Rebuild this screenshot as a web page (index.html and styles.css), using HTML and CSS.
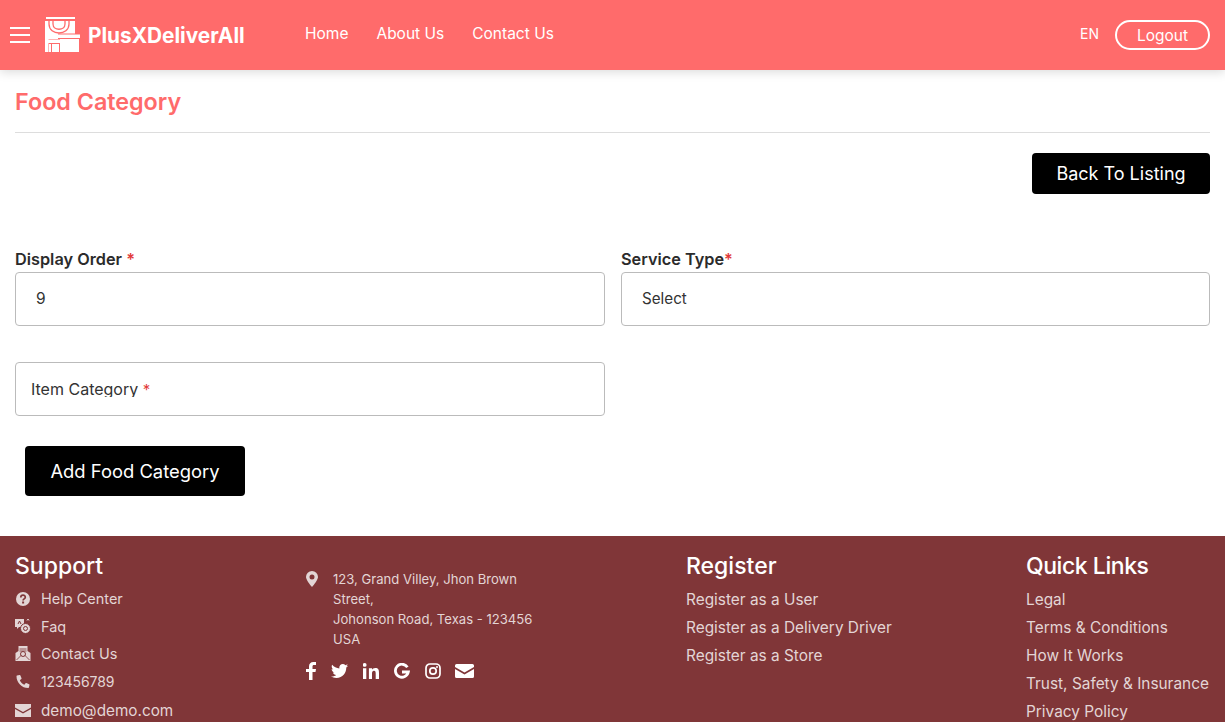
FILE: index.html
```html
<!DOCTYPE html>
<html lang="en">
<head>
	<meta charset="UTF-8">
	<title>Food Category</title>
	<link rel="stylesheet" href="styles.css">
</head>
<body>
<header class="top">
	<div class="burger"><span></span><span></span><span></span></div>
	<svg class="logo" width="36" height="36" viewBox="0 0 36 36">
		<path fill="#fff" d="M1 0h29v2H1zM0 4h30v12.500H13v5.500H3.500v13H0z"/>
		<path fill="none" stroke="#ff6b6b" stroke-width="1.300" d="M4 4v3c0 12 20 12 20 0V4M8 4v3c0 7 12 7 12 0V4"/>
		<path fill="#fff" d="M13 17.500h22v3.500H13zM15 22h19v13H15zM3 22.500h12v3.500H3zM4 27h10v8H4z"/>
		<path stroke="#ff6b6b" d="M6.500 27v8"/>
	</svg>
	<a class="brand">PlusXDeliverAll</a>
	<nav class="menu">
		<a>Home</a>
		<a>About Us</a>
		<a>Contact Us</a>
	</nav>
	<span class="lang">EN</span>
	<a class="logout">Logout</a>
</header>

<main class="content">
	<h1 class="title">Food Category</h1>
	<div class="actions"><a class="btn btn_back">Back To Listing</a></div>
	<form class="form">
		<div class="field">
			<label class="lbl">Display Order <i>*</i></label>
			<div class="box box_val box_num">9</div>
		</div>
		<div class="field">
			<label class="lbl">Service Type<i>*</i></label>
			<div class="box box_val">Select</div>
		</div>
		<div class="field">
			<div class="box box_ph"><span class="ph">Item Category <i>*</i></span></div>
		</div>
	</form>
	<a class="btn btn_add">Add Food Category</a>
</main>

<footer class="foot">
	<div class="col col_support">
		<h3>Support</h3>
		<ul class="sup">
			<li><svg width="14" height="14" viewBox="0 0 14 14"><circle cx="7" cy="7" r="7" fill="#e3d5d5"/><path d="M4.800 5.400c0-3 4.500-3 4.500-.2 0 1.700-2.200 1.600-2.200 3.200" fill="none" stroke="#803638" stroke-width="1.700"/><rect x="6.100" y="9.500" width="2" height="2" fill="#803638"/></svg>Help Center</li>
			<li><svg width="16" height="16" viewBox="0 0 16 16"><path fill="#e3d5d5" d="M0 1h9v8H4l-2 2V9H0z"/><circle cx="10.500" cy="10.500" r="5" fill="#e3d5d5" stroke="#803638"/><circle cx="10.500" cy="10.500" r="2" fill="none" stroke="#803638"/><path stroke="#803638" fill="none" d="M3 6l1.500-3L6 6"/><path stroke="#e3d5d5" fill="none" d="M12 2.500l1-1.500 1 1.500"/></svg>Faq</li>
			<li><svg width="15" height="15" viewBox="0 0 15 15"><path fill="#e3d5d5" d="M3 0h9v5l3 2v8H0V7l3-2z"/><path fill="none" stroke="#803638" stroke-width=".8" d="M4 3h7M4 5h7M1 14l5-5M14 14L9 9"/><circle cx="7.500" cy="8" r="2.500" fill="none" stroke="#803638"/></svg>Contact Us</li>
			<li class="sup_tel"><svg width="13" height="13" viewBox="0 0 512 512"><path fill="#e3d5d5" d="M493 24L389 0c-11-3-23 3-27 14l-48 112c-4 10-1 21 7 28l60 50c-36 77-99 140-177 177l-50-60c-7-8-18-11-28-7L14 362c-11 5-17 16-14 27l24 104c2 11 12 19 23 19 256 0 465-207 465-465 0-11-8-21-19-23z" transform="matrix(-1 0 0 1 512 0)"/></svg>123456789</li>
			<li class="sup_mail"><svg width="16" height="13" viewBox="0 0 16 13"><path fill="#e3d5d5" d="M0 0h16v3.500L8 8 0 3.500zM0 5l8 4.500L16 5v8H0z"/></svg>demo@demo.com</li>
		</ul>
	</div>
	<div class="col col_addr">
		<div class="addr">
			<svg width="12" height="16" viewBox="0 0 12 16"><path fill="#e3d5d5" fill-rule="evenodd" d="M6 0a6 6 0 0 1 6 6c0 2.500-4 8-6 10C4 14 0 8.500 0 6a6 6 0 0 1 6-6zm0 3.500a2.500 2.500 0 1 0 0 5 2.500 2.500 0 0 0 0-5z"/></svg>
			<p>123, Grand Villey, Jhon Brown Street,<br>Johonson Road, Texas - 123456<br>USA</p>
		</div>
		<div class="social">
			<svg width="10" height="18" viewBox="0 0 10 18"><path fill="#fff" d="M3 18V10H0V7h3V4.500C3 1.500 4.800 0 7.300 0H10v3H8C6.800 3 6.500 3.600 6.500 4.600V7H10l-.5 3h-3v8z"/></svg>
			<svg width="17" height="14" viewBox="0 0 512 416"><path fill="#fff" d="M459 104c.3 4.500.3 9 .3 13.600C459.300 256 354 416 161 416 102 416 46 399 0 369c8 1 16 1 25 1 49 0 94-17 130-45-46-1-85-31-98-73 6 1 13 2 20 2 9 0 19-1 27-4C56 240 20 198 20 147v-1c14 8 31 13 48 14C40 141 21 109 21 73c0-20 5-38 14-54C87 83 165 125 253 130c-2-8-3-16-3-24 0-58 47-106 106-106 30 0 58 13 77 33 24-5 47-14 67-26-8 25-25 46-47 59 21-2 42-8 61-16-14 21-32 39-53 54z"/></svg>
			<svg width="16" height="16" viewBox="0 0 16 16"><path fill="#fff" d="M0 5.300h3.300V16H0zM1.700 0a1.900 1.900 0 1 1 0 3.800 1.900 1.900 0 0 1 0-3.800zM5.900 5.300H9v1.500c.5-.9 1.600-1.700 3.300-1.700 3.100 0 3.700 2 3.700 4.800V16h-3.300v-5.300c0-1.300 0-2.900-1.700-2.900s-2 1.400-2 2.800V16H5.900z"/></svg>
			<svg width="16" height="16" viewBox="0 0 16 16"><path fill="none" stroke="#fff" stroke-width="2.800" d="M13.400 4.200A6.500 6.500 0 1 0 14.300 9H8"/></svg>
			<svg width="16" height="16" viewBox="0 0 16 16"><rect x="1" y="1" width="14" height="14" rx="4" fill="none" stroke="#fff" stroke-width="1.700"/><circle cx="8" cy="8" r="3.200" fill="none" stroke="#fff" stroke-width="1.700"/><circle cx="12" cy="4" r="1" fill="#fff"/></svg>
			<svg class="social_mail" width="19" height="14" viewBox="0 0 18 14" preserveAspectRatio="none"><path fill="#fff" d="M1.500 0h15A1.500 1.500 0 0 1 18 1.500V3L9 8.500 0 3V1.500A1.500 1.500 0 0 1 1.500 0zM0 5l9 5.500L18 5v7.500a1.500 1.500 0 0 1-1.500 1.500h-15A1.500 1.500 0 0 1 0 12.500z"/></svg>
		</div>
	</div>
	<div class="col col_reg">
		<h3>Register</h3>
		<ul class="links">
			<li>Register as a User</li>
			<li>Register as a Delivery Driver</li>
			<li>Register as a Store</li>
		</ul>
	</div>
	<div class="col col_quick">
		<h3>Quick Links</h3>
		<ul class="links">
			<li>Legal</li>
			<li>Terms &amp; Conditions</li>
			<li>How It Works</li>
			<li>Trust, Safety &amp; Insurance</li>
			<li>Privacy Policy</li>
		</ul>
	</div>
</footer>
</body>
</html>
```

FILE: styles.css
```css
* { box-sizing: border-box; }
html, body { height: 100%; }
body { margin: 0; overflow: hidden; background: #fff; color: #333; font: 15px Inter, "Open Sans", sans-serif; }
ul { margin: 0; padding: 0; list-style: none; }
h1, h3, p { margin: 0; }
i { font-style: normal; color: #e23b3b; }

.top { height: 70px; display: flex; align-items: center; padding: 0 15px 0 10px; background: #ff6b6b; box-shadow: 0 2px 10px rgba(0,0,0,.15); color: #fff; position: relative; }
.burger { width: 20px; display: flex; flex-direction: column; gap: 5px; margin-right: 15px; }
.burger span { height: 2px; background: #fff; }
.logo { margin-right: 7px; }
.brand { font-size: 20.800px; font-weight: 700; width: 217px; }
.menu { display: flex; gap: 28px; flex: 1; padding-bottom: 3px; }
.menu a { font-size: 15.500px; }
.lang { font-size: 14px; margin: 0 16px 3px 0; }
.logout { width: 95px; height: 30px; border: 2px solid #fff; border-radius: 15px; display: flex; align-items: center; justify-content: center; font-size: 15.500px; }

.content { padding: 0 15px; height: 466px; }
.title { height: 63px; padding-top: 17px; border-bottom: 1px solid #ddd; color: #ff6b6b; font-size: 23.300px; font-weight: 600; }
.actions { display: flex; justify-content: flex-end; padding-top: 20px; height: 116px; }
.btn { display: flex; align-items: center; justify-content: center; background: #000; color: #fff; border-radius: 4px; font-size: 18px; }
.btn_back { width: 178px; height: 41px; }
.form { display: grid; grid-template-columns: 590px 589px; column-gap: 16px; row-gap: 36px; }
.lbl { display: block; height: 23px; font-size: 16.300px; font-weight: 600; color: #2b2b2b; line-height: 20px; }
.box { height: 54px; border: 1px solid #bbb; border-radius: 4px; display: flex; align-items: center; font-size: 15.200px; color: #333; }
.box_val { padding: 0 0 2px 20px; }
.box_num { font-size: 15.500px; }
.box_ph { padding-left: 15px; }
.ph { height: 16px; overflow: hidden; line-height: 17px; font-size: 16px; }
.ph i { font-size: 15px; }
.btn_add { width: 220px; height: 50px; margin: 30px 0 0 10px; font-size: 18.400px; }

.foot { height: 186px; overflow: hidden; padding: 16px 15px 0; display: flex; background: #803638; color: #e3d5d5; font-size: 14.500px; }
.col h3 { color: #fff; font-size: 23px; font-weight: 500; line-height: 28px; }
.col_support { width: 291px; }
.col_addr { width: 380px; padding-top: 17px; }
.col_reg { width: 340px; }
.col_quick h3 { letter-spacing: -.45px; }
.sup { margin-top: 5px; }
.sup li { height: 27.500px; display: flex; align-items: center; gap: 10px; }
.sup svg { width: 16px; flex: none; }
.sup_tel { font-size: 14px; letter-spacing: -.1px; }
.sup .sup_mail { font-size: 15.300px; margin-top: 2px; }
.addr { display: flex; gap: 15px; width: 240px; font-size: 13.100px; line-height: 20px; }
.addr svg { flex: none; margin-top: 2px; }
.social { display: flex; align-items: center; gap: 15px; margin-top: 13px; }
.social_mail { margin-left: -1px; }
.links { margin-top: 6px; }
.links li { height: 28px; line-height: 28px; font-size: 15.400px; }
```
